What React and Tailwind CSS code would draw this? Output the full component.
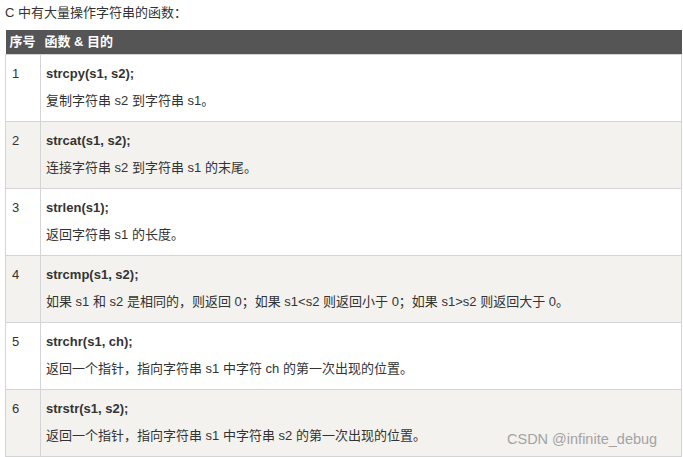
import React from 'react'

// ── Rows of the string-function table
const ROWS = [
  { no: 1, fn: 'strcpy(s1, s2);', desc: '复制字符串 s2 到字符串 s1。' },
  { no: 2, fn: 'strcat(s1, s2);', desc: '连接字符串 s2 到字符串 s1 的末尾。' },
  { no: 3, fn: 'strlen(s1);', desc: '返回字符串 s1 的长度。' },
  { no: 4, fn: 'strcmp(s1, s2);', desc: '如果 s1 和 s2 是相同的，则返回 0；如果 s1<s2 则返回小于 0；如果 s1>s2 则返回大于 0。' },
  { no: 5, fn: 'strchr(s1, ch);', desc: '返回一个指针，指向字符串 s1 中字符 ch 的第一次出现的位置。' },
  { no: 6, fn: 'strstr(s1, s2);', desc: '返回一个指针，指向字符串 s1 中字符串 s2 的第一次出现的位置。' },
]

export default function App() {
  return (
    <div className="relative w-[683px] h-[457px] bg-white text-[#333] text-[13px] font-['Liberation_Sans','Noto_Sans_CJK_SC',sans-serif] overflow-hidden">

      {/* Intro line */}
      <p className="pl-[5px] pt-[4px] h-[30px] leading-[18px]">C 中有大量操作字符串的函数：</p>

      <table className="ml-[5px] w-[677px] border-collapse">
        <thead>
          <tr className="bg-[#555555] text-white h-[24px]">
            <th className="w-[35px] pl-[4px] text-left font-bold whitespace-nowrap leading-[18px]">序号</th>
            <th className="pl-[4px] text-left font-bold leading-[18px]">函数 &amp; 目的</th>
          </tr>
        </thead>
        <tbody>
          {ROWS.map((r, i) => (
            <tr key={r.no} className={i % 2 ? 'bg-[#f3f2ee]' : 'bg-white'}>
              <td className="w-[35px] h-[67px] border border-[#d4d4d4] pl-[6px] align-top pt-[10px] leading-[18px]">{r.no}</td>
              <td className="border border-[#d4d4d4] pl-[5px] align-top pt-[10px] leading-[18px]">
                <p className="font-bold">{r.fn}</p>
                <p className="mt-[9px]">{r.desc}</p>
              </td>
            </tr>
          ))}
        </tbody>
      </table>

      {/* Watermark */}
      <span className="absolute left-[507px] top-[430px] text-[14.5px] text-[#a3a3a3] leading-[18px] whitespace-nowrap">
        CSDN @infinite_debug
      </span>
    </div>
  )
}
